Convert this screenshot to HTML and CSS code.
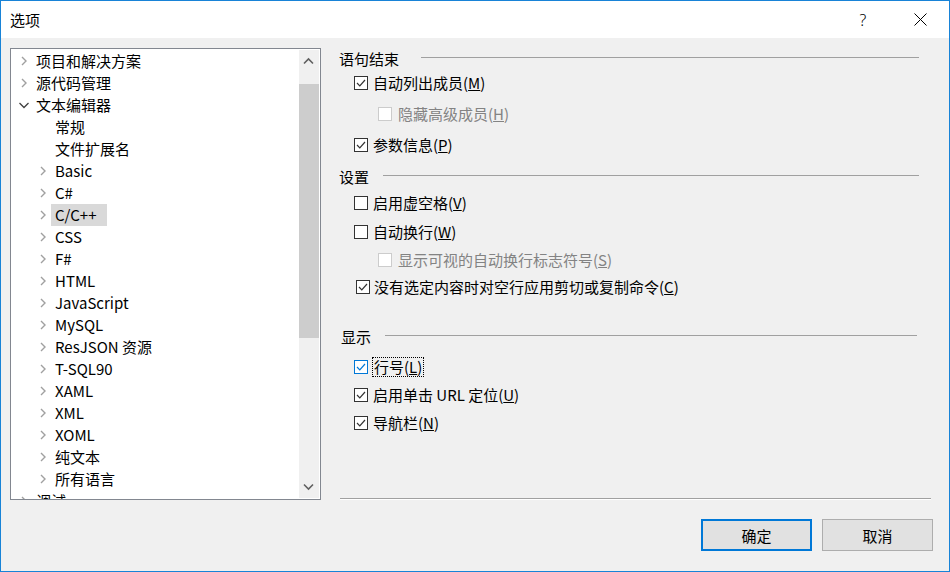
FILE: index.html
```html
<!DOCTYPE html>
<html lang="zh-CN">
<head>
<meta charset="utf-8">
<title>选项</title>
<link rel="stylesheet" href="styles.css">
</head>
<body>
<div class="window">
  <div class="titlebar">
    <span class="title">选项</span>
    <span class="tb-btn tb-help">?</span>
    <span class="tb-btn"><svg width="13" height="13" viewBox="0 0 13 13"><path d="M0.5 0.5L12.5 12.5M12.5 0.5L0.5 12.5" stroke="#000" stroke-width="1" fill="none"/></svg></span>
  </div>
  <div class="content">
    <div class="main">
      <div class="tree">
        <div class="tree-list">
          <div class="row"><span class="exp"><svg class="chev" width="16" height="22" viewBox="0 0 16 22"><polyline points="6,7 10,11 6,15" class="chev-c"/></svg></span><span class="lbl">项目和解决方案</span></div>
          <div class="row"><span class="exp"><svg class="chev" width="16" height="22" viewBox="0 0 16 22"><polyline points="6,7 10,11 6,15" class="chev-c"/></svg></span><span class="lbl">源代码管理</span></div>
          <div class="row"><span class="exp"><svg class="chev" width="16" height="22" viewBox="0 0 16 22"><polyline points="3.5,9 8,13.5 12.5,9" class="chev-o"/></svg></span><span class="lbl">文本编辑器</span></div>
          <div class="row row--sub"><span class="exp"></span><span class="lbl">常规</span></div>
          <div class="row row--sub"><span class="exp"></span><span class="lbl">文件扩展名</span></div>
          <div class="row row--sub"><span class="exp"><svg class="chev" width="16" height="22" viewBox="0 0 16 22"><polyline points="6,7 10,11 6,15" class="chev-c"/></svg></span><span class="lbl">Basic</span></div>
          <div class="row row--sub"><span class="exp"><svg class="chev" width="16" height="22" viewBox="0 0 16 22"><polyline points="6,7 10,11 6,15" class="chev-c"/></svg></span><span class="lbl">C#</span></div>
          <div class="row row--sub"><span class="exp"><svg class="chev" width="16" height="22" viewBox="0 0 16 22"><polyline points="6,7 10,11 6,15" class="chev-c"/></svg></span><span class="lbl lbl--sel">C/C++</span></div>
          <div class="row row--sub"><span class="exp"><svg class="chev" width="16" height="22" viewBox="0 0 16 22"><polyline points="6,7 10,11 6,15" class="chev-c"/></svg></span><span class="lbl">CSS</span></div>
          <div class="row row--sub"><span class="exp"><svg class="chev" width="16" height="22" viewBox="0 0 16 22"><polyline points="6,7 10,11 6,15" class="chev-c"/></svg></span><span class="lbl">F#</span></div>
          <div class="row row--sub"><span class="exp"><svg class="chev" width="16" height="22" viewBox="0 0 16 22"><polyline points="6,7 10,11 6,15" class="chev-c"/></svg></span><span class="lbl">HTML</span></div>
          <div class="row row--sub"><span class="exp"><svg class="chev" width="16" height="22" viewBox="0 0 16 22"><polyline points="6,7 10,11 6,15" class="chev-c"/></svg></span><span class="lbl">JavaScript</span></div>
          <div class="row row--sub"><span class="exp"><svg class="chev" width="16" height="22" viewBox="0 0 16 22"><polyline points="6,7 10,11 6,15" class="chev-c"/></svg></span><span class="lbl">MySQL</span></div>
          <div class="row row--sub"><span class="exp"><svg class="chev" width="16" height="22" viewBox="0 0 16 22"><polyline points="6,7 10,11 6,15" class="chev-c"/></svg></span><span class="lbl">ResJSON 资源</span></div>
          <div class="row row--sub"><span class="exp"><svg class="chev" width="16" height="22" viewBox="0 0 16 22"><polyline points="6,7 10,11 6,15" class="chev-c"/></svg></span><span class="lbl">T-SQL90</span></div>
          <div class="row row--sub"><span class="exp"><svg class="chev" width="16" height="22" viewBox="0 0 16 22"><polyline points="6,7 10,11 6,15" class="chev-c"/></svg></span><span class="lbl">XAML</span></div>
          <div class="row row--sub"><span class="exp"><svg class="chev" width="16" height="22" viewBox="0 0 16 22"><polyline points="6,7 10,11 6,15" class="chev-c"/></svg></span><span class="lbl">XML</span></div>
          <div class="row row--sub"><span class="exp"><svg class="chev" width="16" height="22" viewBox="0 0 16 22"><polyline points="6,7 10,11 6,15" class="chev-c"/></svg></span><span class="lbl">XOML</span></div>
          <div class="row row--sub"><span class="exp"><svg class="chev" width="16" height="22" viewBox="0 0 16 22"><polyline points="6,7 10,11 6,15" class="chev-c"/></svg></span><span class="lbl">纯文本</span></div>
          <div class="row row--sub"><span class="exp"><svg class="chev" width="16" height="22" viewBox="0 0 16 22"><polyline points="6,7 10,11 6,15" class="chev-c"/></svg></span><span class="lbl">所有语言</span></div>
          <div class="row"><span class="exp"><svg class="chev" width="16" height="22" viewBox="0 0 16 22"><polyline points="6,7 10,11 6,15" class="chev-c"/></svg></span><span class="lbl">调试</span></div>
        </div>
        <div class="scrollbar">
          <div class="sb-btn"><svg width="20" height="22" viewBox="0 0 20 22"><polyline points="5,13.5 9.5,9 14,13.5" class="sb-arrow"/></svg></div>
          <div class="sb-thumb"></div>
          <div class="sb-fill"></div>
          <div class="sb-btn"><svg width="20" height="22" viewBox="0 0 20 22"><polyline points="5,8.5 9.5,13 14,8.5" class="sb-arrow"/></svg></div>
        </div>
      </div>

      <div class="panel">
        <div class="group group--end">
          <div class="group-head"><span>语句结束</span><span class="group-line group-line--wide"></span></div>
          <div class="opt"><span class="box"><svg width="12" height="12" viewBox="0 0 12 12"><polyline points="2,6 4.8,8.8 10,3" class="tick"/></svg></span><span class="opt-text">自动列出成员(<u>M</u>)</span></div>
          <div class="opt opt--sub opt--off"><span class="box"></span><span class="opt-text">隐藏高级成员(<u>H</u>)</span></div>
          <div class="opt"><span class="box"><svg width="12" height="12" viewBox="0 0 12 12"><polyline points="2,6 4.8,8.8 10,3" class="tick"/></svg></span><span class="opt-text">参数信息(<u>P</u>)</span></div>
        </div>

        <div class="group group--set">
          <div class="group-head"><span>设置</span><span class="group-line"></span></div>
          <div class="opt"><span class="box"></span><span class="opt-text">启用虚空格(<u>V</u>)</span></div>
          <div class="opt"><span class="box"></span><span class="opt-text">自动换行(<u>W</u>)</span></div>
          <div class="opt opt--sub opt--off"><span class="box"></span><span class="opt-text">显示可视的自动换行标志符号(<u>S</u>)</span></div>
          <div class="opt opt--shift"><span class="box"><svg width="12" height="12" viewBox="0 0 12 12"><polyline points="2,6 4.8,8.8 10,3" class="tick"/></svg></span><span class="opt-text">没有选定内容时对空行应用剪切或复制命令(<u>C</u>)</span></div>
        </div>

        <div class="group group--disp">
          <div class="group-head"><span>显示</span><span class="group-line"></span></div>
          <div class="opt opt--focus"><span class="box box--hot"><svg width="12" height="12" viewBox="0 0 12 12"><polyline points="2,6 4.8,8.8 10,3" class="tick tick--hot"/></svg></span><span class="opt-text focus-ring">行号(<u>L</u>)</span></div>
          <div class="opt"><span class="box"><svg width="12" height="12" viewBox="0 0 12 12"><polyline points="2,6 4.8,8.8 10,3" class="tick"/></svg></span><span class="opt-text">启用单击 URL 定位(<u>U</u>)</span></div>
          <div class="opt"><span class="box"><svg width="12" height="12" viewBox="0 0 12 12"><polyline points="2,6 4.8,8.8 10,3" class="tick"/></svg></span><span class="opt-text">导航栏(<u>N</u>)</span></div>
        </div>

        <div class="sep"></div>
      </div>
    </div>

    <div class="buttons">
      <button class="btn btn--default">确定</button>
      <button class="btn">取消</button>
    </div>
  </div>
</div>
</body>
</html>
```

FILE: styles.css
```css
html, body {
  margin: 0;
  padding: 0;
}
body {
  font-family: "Noto Sans CJK SC", "Noto Sans", sans-serif;
  font-size: 15px;
  color: #000;
  background: #f0f0f0;
}
.window {
  width: 950px;
  height: 572px;
  box-sizing: border-box;
  border: 1px solid #1883d7;
  display: flex;
  flex-direction: column;
  background: #f0f0f0;
  overflow: hidden;
}
.titlebar {
  height: 37px;
  flex: none;
  background: #fff;
  display: flex;
  align-items: center;
}
.title {
  flex: 1;
  padding-left: 9px;
  line-height: 37px;
}
.tb-btn {
  width: 58px;
  height: 37px;
  display: flex;
  align-items: center;
  justify-content: center;
}
.tb-help {
  font-family: "Noto Sans", sans-serif;
  font-size: 16px;
  font-weight: 300;
  padding-left: 2px;
  box-sizing: border-box;
}
.content {
  flex: 1;
  display: flex;
  flex-direction: column;
}
.main {
  display: flex;
  padding: 10px 0 0 9px;
}
.tree {
  width: 311px;
  height: 452px;
  box-sizing: border-box;
  border: 1px solid #828790;
  background: #fff;
  display: flex;
}
.tree-list {
  flex: 1;
  overflow: hidden;
  padding-top: 1px;
}
.row {
  height: 22px;
  display: flex;
  align-items: center;
  padding-left: 5px;
  white-space: nowrap;
}
.row--sub {
  padding-left: 24px;
}
.exp {
  width: 16px;
  height: 22px;
  flex: none;
}
.chev {
  display: block;
}
.chev-c {
  fill: none;
  stroke: #a0a0a0;
  stroke-width: 1.4;
}
.chev-o {
  fill: none;
  stroke: #404040;
  stroke-width: 1.3;
}
.lbl {
  padding: 0 4px;
  line-height: 22px;
  height: 22px;
}
.lbl--sel {
  background: #d9d9d9;
  padding-right: 10px;
}
.scrollbar {
  width: 20px;
  margin: 1px 1px 1px 0;
  background: #f0f0f0;
  display: flex;
  flex-direction: column;
}
.sb-btn {
  height: 22px;
  flex: none;
}
.sb-btn svg {
  display: block;
}
.sb-arrow {
  fill: none;
  stroke: #606060;
  stroke-width: 1.6;
}
.sb-thumb {
  margin-top: 12px;
  height: 254px;
  background: #cdcdcd;
  flex: none;
}
.sb-fill {
  flex: 1;
}
.panel {
  width: 592px;
  height: 452px;
  margin-left: 18px;
  display: flex;
  flex-direction: column;
}
.group {
  display: flex;
  flex-direction: column;
  margin-right: 12px;
}
.group-head {
  height: 22px;
  line-height: 22px;
  display: flex;
  align-items: center;
}
.group-line {
  flex: 1;
  height: 0;
  border-top: 1px solid #a0a0a0;
  margin-left: 14px;
  margin-bottom: 3px;
}
.group-line--wide {
  margin-left: 22px;
}
.opt {
  height: 22px;
  margin-top: 6px;
  display: flex;
  align-items: center;
  padding-left: 15px;
  white-space: nowrap;
}
.box {
  width: 14px;
  height: 14px;
  box-sizing: border-box;
  border: 1px solid #333;
  background: #fff;
  display: flex;
  align-items: center;
  justify-content: center;
  flex: none;
}
.box svg {
  display: block;
}
.tick {
  fill: none;
  stroke: #333;
  stroke-width: 1.2;
}
.tick--hot {
  stroke: #0078d7;
}
.box--hot {
  border-color: #0078d7;
}
.opt-text {
  margin-left: 5px;
  line-height: 22px;
}
.opt--sub {
  padding-left: 39px;
}
.opt--sub .opt-text {
  margin-left: 6px;
}
.opt--off .box {
  border-color: #cccccc;
}
.opt--off .opt-text {
  color: #838383;
}
.opt--shift {
  padding-left: 17px;
}
.opt--shift .opt-text {
  margin-left: 4px;
}
.focus-ring {
  line-height: 18px;
  padding: 0 1px;
  margin-left: 4px;
  border: 1px dotted #000;
}

.group--end .opt:nth-child(2) { margin-top: 2px; }
.group--end .opt:nth-child(3) { margin-top: 9px; }
.group--end .opt:nth-child(4) { margin-top: 9px; }

.group--set { margin-top: 10px; }
.group--set .opt:nth-child(2) { margin-top: 4px; }
.group--set .opt:nth-child(3) { margin-top: 7px; }
.group--set .opt:nth-child(5) { margin-top: 5px; }

.group--disp {
  margin-top: 28px;
  margin-left: 2px;
  margin-right: 14px;
}
.group--disp .opt { padding-left: 13px; }
.group--disp .opt:nth-child(2) { margin-top: 8px; }

.sep {
  margin-top: auto;
  margin-left: 1px;
  height: 0;
  border-top: 1px solid #a0a0a0;
  border-bottom: 1px solid #fff;
}
.buttons {
  display: flex;
  justify-content: flex-end;
  gap: 10px;
  margin-top: 19px;
  padding-right: 16px;
}
.btn {
  width: 111px;
  height: 32px;
  box-sizing: border-box;
  border: 1px solid #adadad;
  background: #e1e1e1;
  font-family: "Noto Sans CJK SC", sans-serif;
  font-size: 15px;
  color: #000;
  padding: 0;
  margin: 0;
}
.btn--default {
  border: 2px solid #0078d7;
}
```
